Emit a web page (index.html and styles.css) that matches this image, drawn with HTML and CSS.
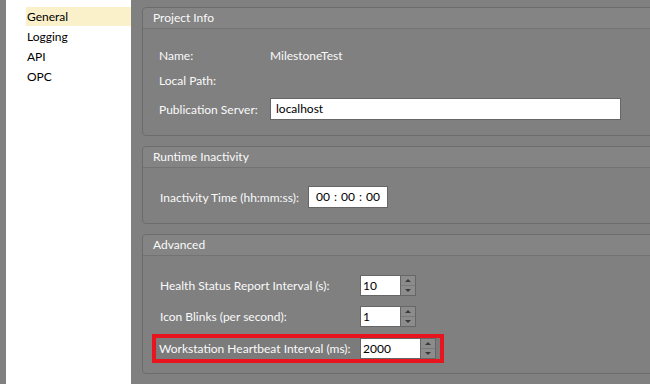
FILE: index.html
```html
<!DOCTYPE html>
<html lang="en">
<head>
  <meta charset="UTF-8" />
  <title>Settings</title>
  <link rel="stylesheet" href="styles.css">
</head>
<body>
  <div class="nav">
    <div class="nav-item selected">General</div>
    <div class="nav-item">Logging</div>
    <div class="nav-item">API</div>
    <div class="nav-item">OPC</div>
  </div>

  <div class="main">
    <div class="group group-project">
      <div class="group-head">Project Info</div>
      <div class="group-body">
        <div class="row row-name">
          <span class="label label-project">Name:</span>
          <span class="value">MilestoneTest</span>
        </div>
        <div class="row row-path">
          <span class="label label-project">Local Path:</span>
        </div>
        <div class="row row-server">
          <span class="label label-project">Publication Server:</span>
          <div class="field field-wide">localhost</div>
        </div>
      </div>
    </div>

    <div class="group group-runtime">
      <div class="group-head">Runtime Inactivity</div>
      <div class="group-body body-runtime">
        <div class="row">
          <span class="label label-time">Inactivity Time (hh:mm:ss):</span>
          <div class="field field-time">00 : 00 : 00</div>
        </div>
      </div>
    </div>

    <div class="group group-advanced">
      <div class="group-head">Advanced</div>
      <div class="group-body body-advanced">
        <div class="row row-adv">
          <span class="label label-adv">Health Status Report Interval (s):</span>
          <div class="field field-num">10</div>
          <div class="spin"><span class="up"></span><span class="down"></span></div>
        </div>
        <div class="row row-adv row-blinks">
          <span class="label label-adv">Icon Blinks (per second):</span>
          <div class="field field-num">1</div>
          <div class="spin"><span class="up"></span><span class="down"></span></div>
        </div>
        <div class="row row-adv row-marked">
          <span class="label label-adv label-marked">Workstation Heartbeat Interval (ms):</span>
          <div class="field field-num field-long">2000</div>
          <div class="spin"><span class="up"></span><span class="down"></span></div>
        </div>
      </div>
    </div>
  </div>
</body>
</html>
```

FILE: styles.css
```css
body {
  margin: 0;
  width: 650px;
  height: 384px;
  overflow: hidden;
  background: #808080;
  font-family: 'Lato', sans-serif;
  font-size: 12px;
  display: flex;
}
.nav {
  margin-left: 6px;
  width: 125px;
  height: 384px;
  background: #fff;
  padding: 7px 0 0 20px;
  box-sizing: border-box;
  flex-shrink: 0;
}
.nav-item {
  height: 20px;
  line-height: 19px;
  padding-left: 1px;
  color: #000;
}
.nav-item.selected {
  background: #faf1cb;
  height: 19px;
  margin-bottom: 1px;
}
.main {
  padding: 7px 0 0 11px;
  width: 560px;
  flex-shrink: 0;
  display: flex;
  flex-direction: column;
  gap: 10px;
}
.group {
  border: 1px solid #6c6c6c;
  border-radius: 4px;
  background: #808080;
  color: #fafafa;
}
.group-head {
  height: 20px;
  line-height: 20px;
  padding-left: 10px;
  background: #848484;
  border-bottom: 1px solid #737373;
  border-radius: 4px 4px 0 0;
}
.group-body {
  padding: 15px 0 15px 16px;
}
.row {
  display: flex;
  align-items: center;
  height: 22px;
}
.label {
  flex-shrink: 0;
  white-space: nowrap;
}
.row-path {
  margin-top: 3px;
}
.row-server {
  margin-top: 7px;
}
.label-project {
  width: 111px;
}
.field {
  flex-shrink: 0;
  background: #fff;
  color: #000;
  border: 1px solid #666;
  height: 20px;
  line-height: 20px;
  box-sizing: content-box;
  white-space: nowrap;
}
.field-wide {
  width: 344px;
  padding-left: 5px;
}
.body-runtime {
  padding: 18px 0 15px 17px;
}
.label-time {
  width: 148px;
}
.field-time {
  width: 78px;
  text-align: center;
  word-spacing: 1px;
}
.body-advanced {
  padding: 19px 0 10px 17px;
}
.row-adv {
  height: 21px;
}
.label-adv {
  width: 200px;
}
.field-num {
  width: 37px;
  height: 19px;
  line-height: 19px;
  padding-left: 2px;
}
.field-long {
  width: 57px;
}
.row-blinks {
  margin-top: 10px;
}
.row-marked {
  margin: 7px 0 0 -8px;
  height: 21px;
  padding: 0 4px 0 0;
  border: 4px solid #e8141e;
  width: fit-content;
  background: #7b7b7b;
}
.row-marked .label-marked {
  padding-left: 3px;
  width: 201px;
}
.spin {
  flex-shrink: 0;
  width: 14px;
  height: 19px;
  border: 1px solid #666;
  border-left: none;
  background: #8c8c8c;
  display: flex;
  flex-direction: column;
}
.spin span {
  flex: 1;
  position: relative;
}
.spin .up {
  border-bottom: 1px solid #7a7a7a;
}
.spin .up::after,
.spin .down::after {
  content: "";
  position: absolute;
  left: 4px;
  top: 3px;
  border-left: 3px solid transparent;
  border-right: 3px solid transparent;
}
.spin .up::after {
  border-bottom: 3px solid #3a3a3a;
}
.spin .down::after {
  border-top: 3px solid #3a3a3a;
}
```
